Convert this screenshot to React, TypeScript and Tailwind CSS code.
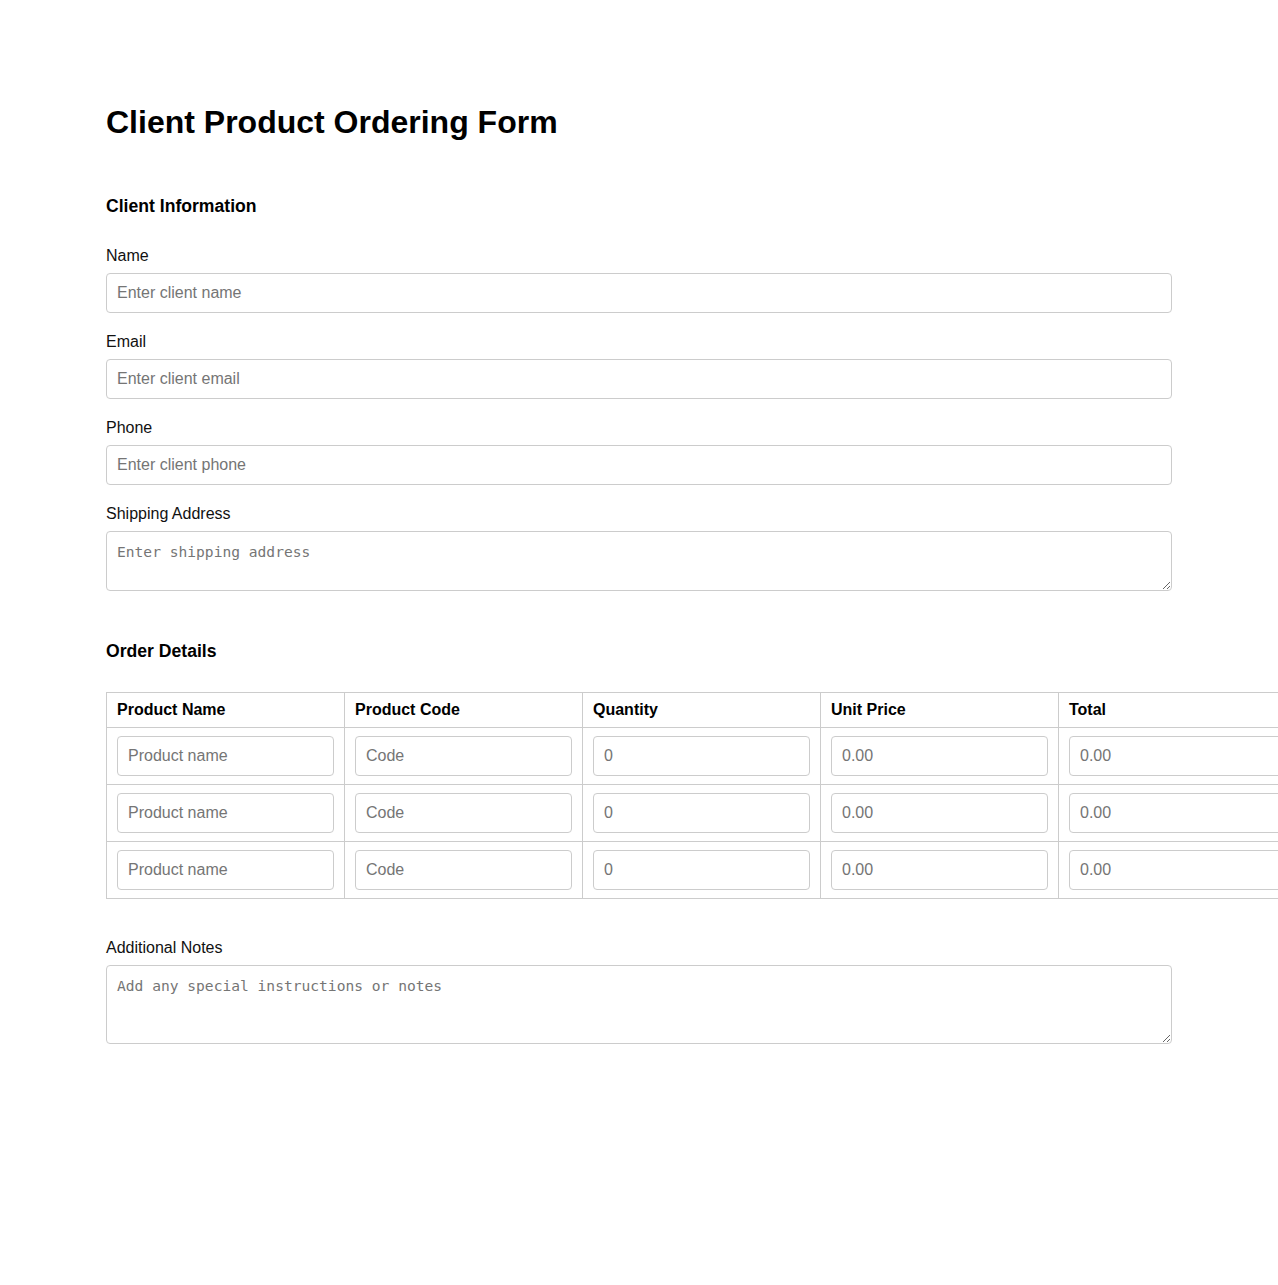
import React from "react";

const columns = ["Product Name", "Product Code", "Quantity", "Unit Price", "Total"];

const rows = [0, 1, 2];

const inputCls =
  "block w-full h-[40px] px-[10px] border border-[#ccc] rounded-[4px] text-[16px] text-[#222] placeholder:text-[#757575] outline-none font-['Liberation_Sans',Arial,sans-serif]";

const areaCls =
  "block w-full px-[10px] py-[10px] border border-[#ccc] rounded-[4px] text-[14.6px] leading-[19px] text-[#222] placeholder:text-[#757575] outline-none font-['DejaVu_Sans_Mono',monospace]";

function Field({ label, placeholder }: { label: string; placeholder: string }) {
  return (
    <div className="mb-[20px]">
      <label className="block mb-[8px] text-[16px] leading-[18px] text-[#111]">{label}</label>
      <input type="text" placeholder={placeholder} className={inputCls} />
    </div>
  );
}

export default function App() {
  return (
    <div className="min-h-[1285px] bg-white font-['Liberation_Sans',Arial,sans-serif] text-black overflow-hidden">
      <div className="w-[1066px] mx-auto pt-[104px]">
        <h1 className="text-[32px] leading-[37px] font-bold">Client Product Ordering Form</h1>

        {/* client section */}
        <section className="mt-[55px]">
          <h2 className="text-[17.6px] leading-[21px] font-bold mb-[30px]">Client Information</h2>
          <Field label="Name" placeholder="Enter client name" />
          <Field label="Email" placeholder="Enter client email" />
          <Field label="Phone" placeholder="Enter client phone" />
          <div>
            <label className="block mb-[8px] text-[16px] leading-[18px] text-[#111]">Shipping Address</label>
            <textarea placeholder="Enter shipping address" className={`${areaCls} h-[60px]`} />
          </div>
        </section>

        {/* order section */}
        <section className="mt-[50px]">
          <h2 className="text-[17.6px] leading-[21px] font-bold mb-[30px]">Order Details</h2>
          <table className="table-fixed w-[1191px] border-collapse">
            <colgroup>
              {columns.map((c) => (
                <col key={c} className="w-[238px]" />
              ))}
            </colgroup>
            <thead>
              <tr>
                {columns.map((c) => (
                  <th
                    key={c}
                    className="border border-[#ccc] px-[10px] py-[8px] text-left text-[16px] leading-[18px] font-bold"
                  >
                    {c}
                  </th>
                ))}
              </tr>
            </thead>
            <tbody>
              {rows.map((r) => (
                <tr key={r}>
                  <td className="border border-[#ccc] px-[10px] py-[8px]">
                    <input type="text" placeholder="Product name" className={inputCls} />
                  </td>
                  <td className="border border-[#ccc] px-[10px] py-[8px]">
                    <input type="text" placeholder="Code" className={inputCls} />
                  </td>
                  <td className="border border-[#ccc] px-[10px] py-[8px]">
                    <input type="text" placeholder="0" className={inputCls} />
                  </td>
                  <td className="border border-[#ccc] px-[10px] py-[8px]">
                    <input type="text" placeholder="0.00" className={inputCls} />
                  </td>
                  <td className="border border-[#ccc] px-[10px] py-[8px]">
                    <input type="text" placeholder="0.00" className={inputCls} />
                  </td>
                </tr>
              ))}
            </tbody>
          </table>

          <div className="mt-[40px]">
            <label className="block mb-[8px] text-[16px] leading-[18px] text-[#111]">Additional Notes</label>
            <textarea placeholder="Add any special instructions or notes" className={`${areaCls} h-[79px]`} />
          </div>
        </section>
      </div>
    </div>
  );
}
